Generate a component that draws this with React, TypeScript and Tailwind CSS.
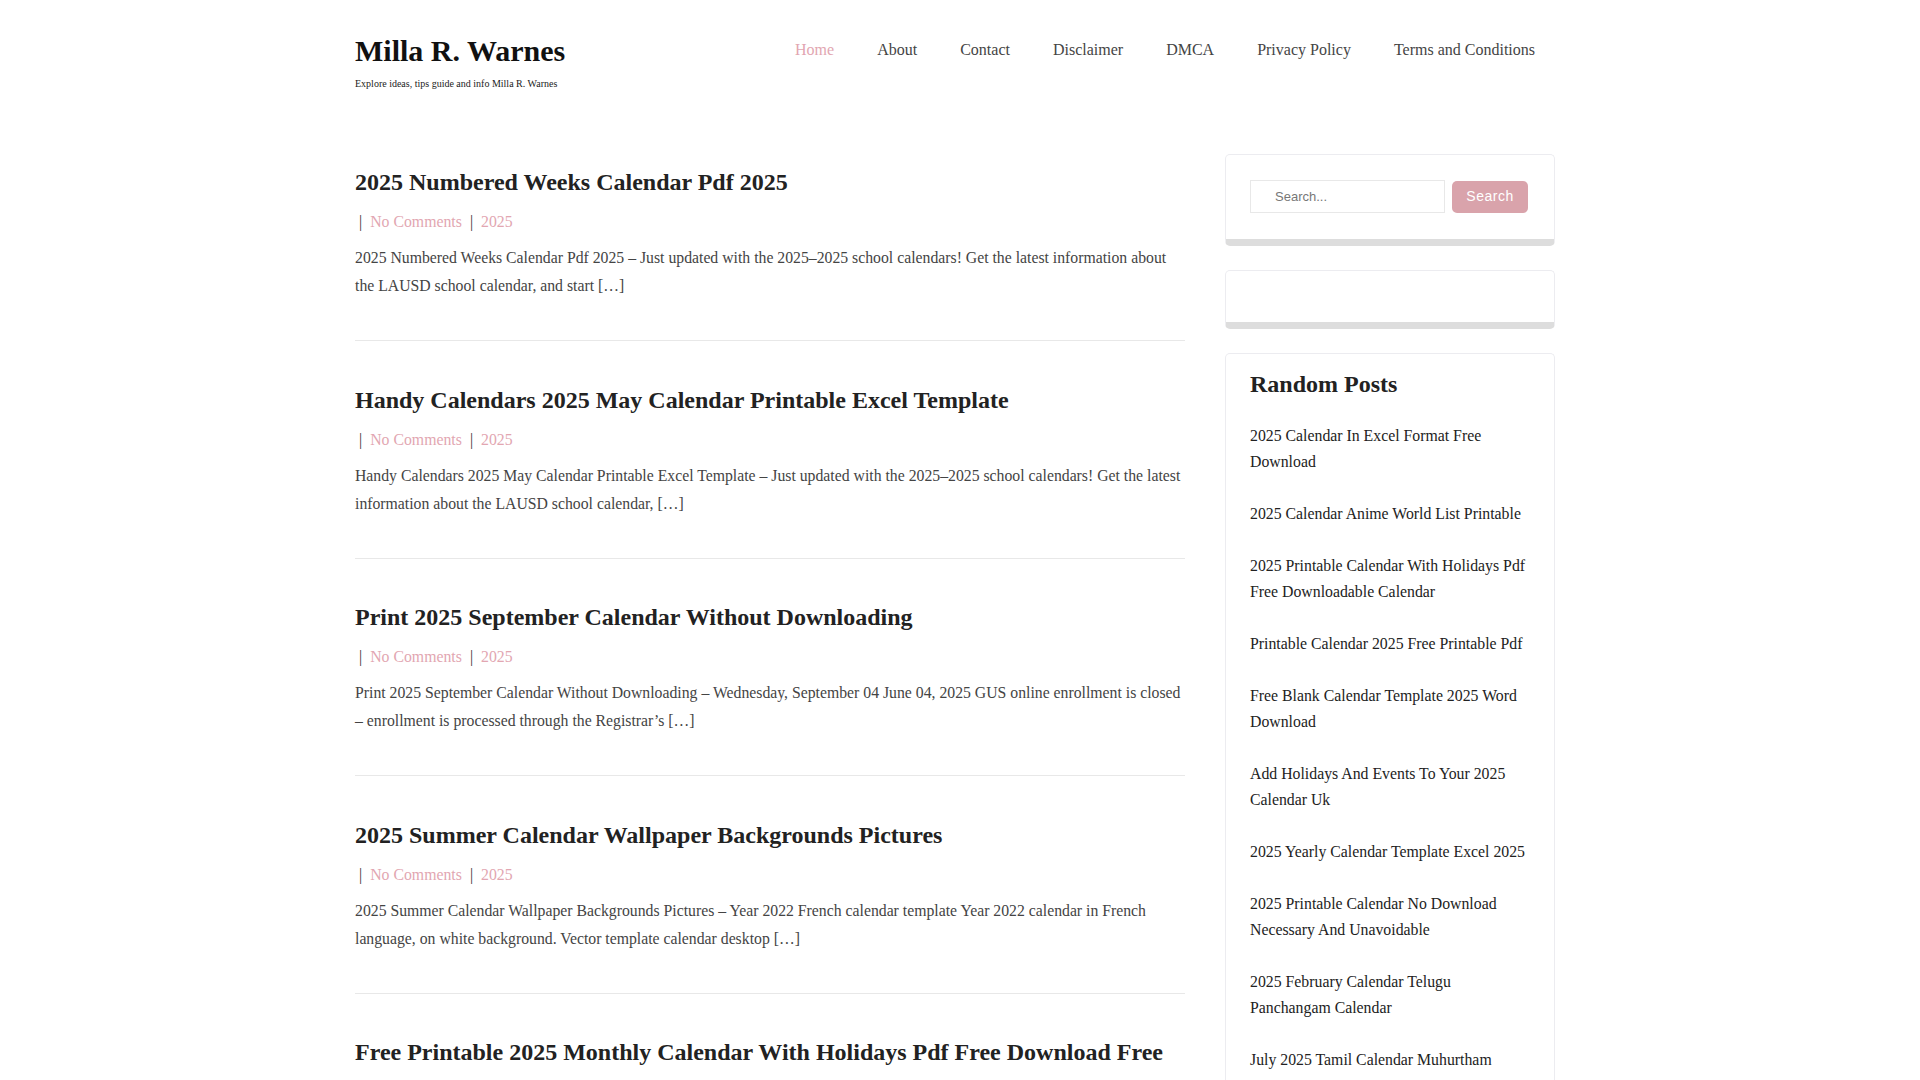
const navItems = ['Home', 'About', 'Contact', 'Disclaimer', 'DMCA', 'Privacy Policy', 'Terms and Conditions']

const posts = [
  {
    title: '2025 Numbered Weeks Calendar Pdf 2025',
    excerpt:
      '2025 Numbered Weeks Calendar Pdf 2025 – Just updated with the 2025–2025 school calendars! Get the latest information about the LAUSD school calendar, and start […]',
  },
  {
    title: 'Handy Calendars 2025 May Calendar Printable Excel Template',
    excerpt:
      'Handy Calendars 2025 May Calendar Printable Excel Template – Just updated with the 2025–2025 school calendars! Get the latest information about the LAUSD school calendar, […]',
  },
  {
    title: 'Print 2025 September Calendar Without Downloading',
    excerpt:
      'Print 2025 September Calendar Without Downloading – Wednesday, September 04 June 04, 2025 GUS online enrollment is closed – enrollment is processed through the Registrar’s […]',
  },
  {
    title: '2025 Summer Calendar Wallpaper Backgrounds Pictures',
    excerpt:
      '2025 Summer Calendar Wallpaper Backgrounds Pictures – Year 2022 French calendar template Year 2022 calendar in French language, on white background. Vector template calendar desktop […]',
  },
  {
    title: 'Free Printable 2025 Monthly Calendar With Holidays Pdf Free Download Free',
    excerpt:
      'Free Printable 2025 Monthly Calendar With Holidays Pdf Free Download Free – Just updated with the 2025–2025 school calendars! Get the latest information about the LAUSD school calendar, […]',
  },
  {
    title: '2025 Calendar In Excel Format Free Download',
    excerpt:
      '2025 Calendar In Excel Format Free Download – Just updated with the 2025–2025 school calendars! Get the latest information about the LAUSD school calendar, and start […]',
  },
  {
    title: '2025 Calendar Anime World List Printable',
    excerpt:
      '2025 Calendar Anime World List Printable – Just updated with the 2025–2025 school calendars! Get the latest information about the LAUSD school calendar, and start […]',
  },
  {
    title: 'Printable Calendar 2025 Free Printable Pdf',
    excerpt:
      'Printable Calendar 2025 Free Printable Pdf – Just updated with the 2025–2025 school calendars! Get the latest information about the LAUSD school calendar, and start […]',
  },
  {
    title: 'Free Blank Calendar Template 2025 Word Download',
    excerpt:
      'Free Blank Calendar Template 2025 Word Download – Just updated with the 2025–2025 school calendars! Get the latest information about the LAUSD school calendar, and start […]',
  },
  {
    title: 'Add Holidays And Events To Your 2025 Calendar Uk',
    excerpt:
      'Add Holidays And Events To Your 2025 Calendar Uk – Just updated with the 2025–2025 school calendars! Get the latest information about the LAUSD school calendar, and start […]',
  },
  {
    title: '2025 Yearly Calendar Template Excel 2025',
    excerpt:
      '2025 Yearly Calendar Template Excel 2025 – Just updated with the 2025–2025 school calendars! Get the latest information about the LAUSD school calendar, and start […]',
  },
  {
    title: '2025 February Calendar Telugu Panchangam Calendar',
    excerpt:
      '2025 February Calendar Telugu Panchangam Calendar – Just updated with the 2025–2025 school calendars! Get the latest information about the LAUSD school calendar, and start […]',
  },
  {
    title: 'July 2025 Tamil Calendar Muhurtham',
    excerpt:
      'July 2025 Tamil Calendar Muhurtham – Just updated with the 2025–2025 school calendars! Get the latest information about the LAUSD school calendar, and start […]',
  },
]

const randomPosts = [
  '2025 Calendar In Excel Format Free Download',
  '2025 Calendar Anime World List Printable',
  '2025 Printable Calendar With Holidays Pdf Free Downloadable Calendar',
  'Printable Calendar 2025 Free Printable Pdf',
  'Free Blank Calendar Template 2025 Word Download',
  'Add Holidays And Events To Your 2025 Calendar Uk',
  '2025 Yearly Calendar Template Excel 2025',
  '2025 Printable Calendar No Download Necessary And Unavoidable',
  '2025 February Calendar Telugu Panchangam Calendar',
  'July 2025 Tamil Calendar Muhurtham',
]

function PostItem({ post, first }: { post: { title: string; excerpt: string }; first: boolean }) {
  return (
    <article className={`${first ? 'pt-[13px]' : 'pt-[43.5px]'} pb-10 border-b border-[#e8e8e8]`}>
      <h2 className="text-[24px] leading-[31px] font-bold text-[#222222] mb-[10px]">
        <a href="#">{post.title}</a>
      </h2>
      <div className="flex items-center gap-[8px] pl-[4px] text-[15.8px] leading-[28px] mb-[8px]">
        <span className="text-[#333333]">|</span>
        <a href="#" className="text-[#e2a6b1]">No Comments</a>
        <span className="text-[#333333]">|</span>
        <a href="#" className="text-[#e2a6b1]">2025</a>
      </div>
      <p className="text-[15.75px] leading-[28px] text-[#444444]">{post.excerpt}</p>
    </article>
  )
}

export default function App() {
  return (
    <div className="bg-white min-h-screen pr-[10px] font-['Liberation_Serif',serif] text-[#333333]">
      {/* Header */}
      <header className="w-[1200px] mx-auto pt-[33px] flex justify-between items-start">
        <div>
          <h1 className="text-[30px] leading-[36px] font-bold text-[#111111]">
            <a href="#">Milla R. Warnes</a>
          </h1>
          <p className="mt-[7px] text-[10px] leading-[15px] text-[#222222]">
            Explore ideas, tips guide and info Milla R. Warnes
          </p>
        </div>
        <nav className="mt-[5px] mr-[20px]">
          <ul className="flex gap-[43px] text-[16px] leading-[24px]">
            {navItems.map((item, i) => (
              <li key={item}>
                <a href="#" className={i === 0 ? 'text-[#e2a6b1]' : 'text-[#444444]'}>
                  {item}
                </a>
              </li>
            ))}
          </ul>
        </nav>
      </header>

      {/* Content */}
      <div className="w-[1200px] mx-auto mt-[63px] flex justify-between items-start pb-20">
        <main className="w-[830px]">
          {posts.map((post, i) => (
            <PostItem key={i} post={post} first={i === 0} />
          ))}
        </main>

        <aside className="w-[330px] flex flex-col gap-6">
          <div className="bg-white rounded-[5px] border border-[#ececf0] border-b-[7px] border-b-[#dddddd] px-6 pt-[25px] pb-[26px]">
            <form className="flex items-center gap-[7px]" onSubmit={(e) => e.preventDefault()}>
              <input
                type="text"
                placeholder="Search..."
                className="w-[195px] h-[33px] border border-[#e8e8e8] pl-[24px] text-[13px] font-['Liberation_Sans',sans-serif] text-[#555555] placeholder:text-[#777777] outline-none"
              />
              <button
                type="submit"
                className="w-[76px] h-[32px] rounded-[5px] bg-[#d9a3ab] text-white text-[14px] tracking-[0.5px] font-['Liberation_Sans',sans-serif]"
              >
                Search
              </button>
            </form>
          </div>

          <div className="bg-white rounded-[5px] border border-[#ececf0] border-b-[7px] border-b-[#dddddd] h-[59px]"></div>

          <div className="bg-white rounded-[5px] border border-[#ececf0] border-b-[7px] border-b-[#dddddd] px-6 pt-[15px] pb-6">
            <h3 className="text-[24px] leading-[31px] font-bold text-[#222222]">Random Posts</h3>
            <ul className="mt-[23px] flex flex-col gap-[26px]">
              {randomPosts.map((title) => (
                <li key={title} className="text-[15.8px] leading-[26px] text-[#222222]">
                  <a href="#">{title}</a>
                </li>
              ))}
            </ul>
          </div>
        </aside>
      </div>
    </div>
  )
}
